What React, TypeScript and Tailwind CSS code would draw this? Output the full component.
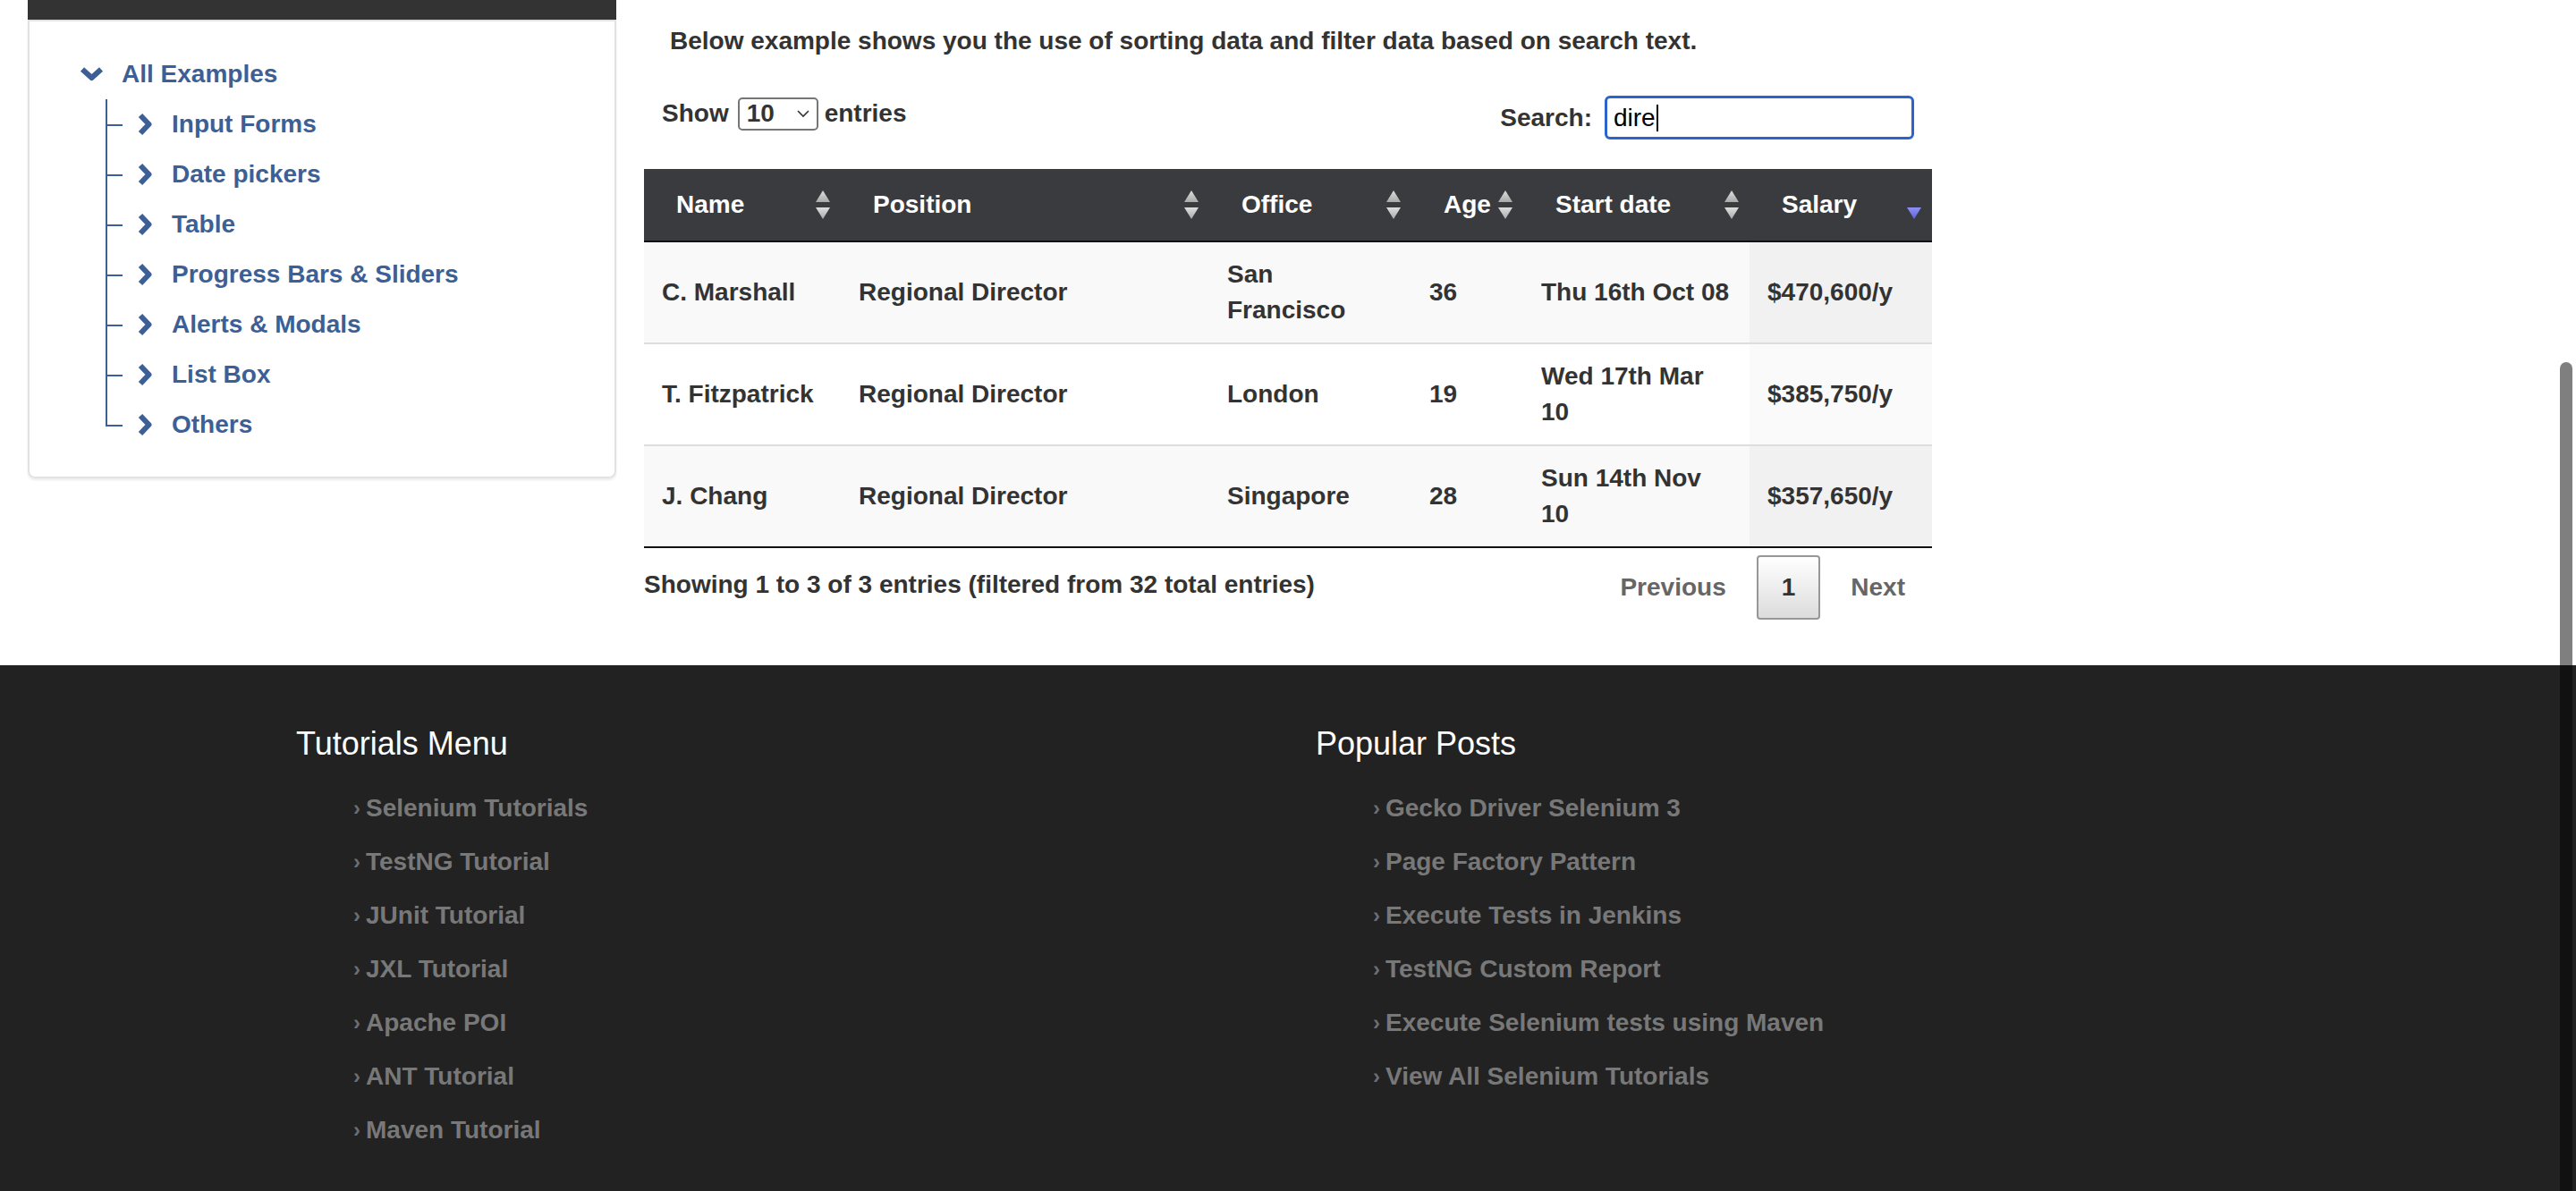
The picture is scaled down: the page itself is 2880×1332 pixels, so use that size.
const rows = [
  { name: "C. Marshall", position: "Regional Director", office: "San Francisco", age: "36", start: "Thu 16th Oct 08", salary: "$470,600/y" },
  { name: "T. Fitzpatrick", position: "Regional Director", office: "London", age: "19", start: "Wed 17th Mar 10", salary: "$385,750/y" },
  { name: "J. Chang", position: "Regional Director", office: "Singapore", age: "28", start: "Sun 14th Nov 10", salary: "$357,650/y" },
]

const examples = ["Input Forms", "Date pickers", "Table", "Progress Bars & Sliders", "Alerts & Modals", "List Box", "Others"]

const tutorials = ["Selenium Tutorials", "TestNG Tutorial", "JUnit Tutorial", "JXL Tutorial", "Apache POI", "ANT Tutorial", "Maven Tutorial"]

const posts = [
  "Gecko Driver Selenium 3",
  "Page Factory Pattern",
  "Execute Tests in Jenkins",
  "TestNG Custom Report",
  "Execute Selenium tests using Maven",
  "View All Selenium Tutorials",
]

// thick glyphicon-like chevrons
function ChevronRight() {
  return (
    <svg width="18" height="26" viewBox="0 0 18 26" className="shrink-0">
      <polyline points="4,3 13.5,13 4,23" fill="none" stroke="#3c6095" strokeWidth="6" strokeLinejoin="round" />
    </svg>
  )
}

function ChevronDown() {
  return (
    <svg width="27" height="18" viewBox="0 0 27 18" className="shrink-0">
      <polyline points="3,3.5 13.5,13 24,3.5" fill="none" stroke="#3c6095" strokeWidth="6" strokeLinejoin="round" />
    </svg>
  )
}

// DataTables style sort arrows
function SortIcon({ desc }: { desc?: boolean }) {
  return (
    <svg width="16" height="34" viewBox="0 0 16 34" className="shrink-0">
      <defs>
        <linearGradient id="sortGrey" x1="0" y1="0" x2="0" y2="1">
          <stop offset="0" stopColor="#dedede" />
          <stop offset="1" stopColor="#a9a9a9" />
        </linearGradient>
        <linearGradient id="sortBlue" x1="0" y1="0" x2="0" y2="1">
          <stop offset="0" stopColor="#8e91f2" />
          <stop offset="1" stopColor="#5d62d8" />
        </linearGradient>
      </defs>
      {!desc && <polygon points="8,1 16,14 0,14" fill="url(#sortGrey)" />}
      <polygon points="0,20 16,20 8,33" fill={desc ? "url(#sortBlue)" : "url(#sortGrey)"} />
    </svg>
  )
}

function HeadCell({ label, desc }: { label: string; desc?: boolean }) {
  return (
    <th className="bg-[#3a3b3e] py-[20px] pl-[36px] pr-[12px] text-left font-bold leading-[40px] text-white border-b-2 border-[#111]">
      <div className="flex items-center justify-between">
        <span>{label}</span>
        <SortIcon desc={desc} />
      </div>
    </th>
  )
}

function FooterList({ title, items }: { title: string; items: string[] }) {
  return (
    <div className="w-[1140px]">
      <h3 className="text-[36px] font-normal leading-[40px] text-white">{title}</h3>
      <ul className="mt-[22px] pl-[64px]">
        {items.map((item) => (
          <li key={item} className="flex h-[60px] items-center text-[28px] font-bold text-[#787878]">
            <span className="mr-[6px] text-[24px] text-[#6e6e6e]">›</span>
            {item}
          </li>
        ))}
      </ul>
    </div>
  )
}

export default function App() {
  return (
    <div className="relative flex h-[1332px] w-full flex-col overflow-hidden bg-white font-['Liberation_Sans',Arial,sans-serif] text-[28px] text-[#333]">
      <div className="flex items-start">
        {/* Sidebar */}
        <div className="ml-[31px] w-[658px]">
          <div className="h-[22px] bg-[#333]" />
          <div className="rounded-b-[8px] border-x-2 border-b-2 border-t-2 border-[#e2e2e2] pt-[31px] pb-[30px] shadow-[0_2px_3px_rgba(0,0,0,0.08)]">
            <div className="flex h-[56px] items-center pl-[56px] font-bold text-[#3c6095]">
              <ChevronDown />
              <span className="ml-[20px]">All Examples</span>
            </div>
            <ul className="ml-[85px]">
              {examples.map((item, i) => (
                <li key={item} className="relative flex h-[56px] items-center pl-[35px] font-bold text-[#3c6095]">
                  <span
                    className={`absolute left-0 top-0 w-[2px] bg-[#3c6095] ${i === examples.length - 1 ? "h-1/2" : "h-full"}`}
                  />
                  <span className="absolute left-0 top-1/2 h-[2px] w-[19px] bg-[#3c6095]" />
                  <ChevronRight />
                  <span className="ml-[21px]">{item}</span>
                </li>
              ))}
            </ul>
          </div>
        </div>

        {/* Main */}
        <div className="ml-[31px] w-[1440px] pt-[26px] pb-[51px] font-bold">
          <p className="pl-[29px] leading-[40px]">
            Below example shows you the use of sorting data and filter data based on search text.
          </p>

          <div className="mt-[41px] flex items-start justify-between">
            <div className="flex h-[40px] items-center pl-[20px]">
              <span>Show</span>
              <div className="ml-[10px] flex h-[37px] w-[90px] items-center justify-between rounded-[5px] border-2 border-[#767676] pl-[8px] pr-[8px]">
                <span>10</span>
                <svg width="14" height="9" viewBox="0 0 14 9">
                  <polyline points="1,1 7,7 13,1" fill="none" stroke="#333" strokeWidth="1.6" />
                </svg>
              </div>
              <span className="ml-[7px]">entries</span>
            </div>
            <div className="flex h-[49px] items-center pr-[20px]">
              <span>Search:</span>
              <div className="ml-[14px] flex h-[49px] w-[346px] items-center rounded-[6px] border-[3px] border-[#2c64c9] pl-[7px] font-normal text-black">
                <span>dire</span>
                <span className="ml-[1px] h-[30px] w-[2px] bg-black" />
              </div>
            </div>
          </div>

          <table className="mt-[33px] w-[1440px] table-fixed border-collapse">
            <colgroup>
              <col className="w-[220px]" />
              <col className="w-[412px]" />
              <col className="w-[226px]" />
              <col className="w-[125px]" />
              <col className="w-[253px]" />
              <col className="w-[204px]" />
            </colgroup>
            <thead>
              <tr>
                <HeadCell label="Name" />
                <HeadCell label="Position" />
                <HeadCell label="Office" />
                <HeadCell label="Age" />
                <HeadCell label="Start date" />
                <HeadCell label="Salary" desc />
              </tr>
            </thead>
            <tbody>
              {rows.map((r, i) => {
                const odd = i % 2 === 0
                const cell = `px-[20px] py-[16px] align-middle leading-[40px] ${odd ? "bg-[#f9f9f9]" : "bg-white"}`
                return (
                  <tr
                    key={r.name}
                    className={i === rows.length - 1 ? "border-b-2 border-[#111]" : "border-b-2 border-[#ddd]"}
                  >
                    <td className={cell}>{r.name}</td>
                    <td className={cell}>{r.position}</td>
                    <td className={cell}>{r.office}</td>
                    <td className={cell}>{r.age}</td>
                    <td className={cell}>{r.start}</td>
                    <td className={`px-[20px] py-[16px] align-middle leading-[40px] ${odd ? "bg-[#f1f1f1]" : "bg-[#fafafa]"}`}>
                      {r.salary}
                    </td>
                  </tr>
                )
              })}
            </tbody>
          </table>

          <div className="flex items-start justify-between">
            <div className="pt-[21px] leading-[40px]">Showing 1 to 3 of 3 entries (filtered from 32 total entries)</div>
            <div className="flex items-center pt-[8px]">
              <span className="border-2 border-transparent px-[28px] py-[14px] leading-[40px] text-[#666]">Previous</span>
              <span className="ml-[4px] rounded-[4px] border-2 border-[#979797] bg-gradient-to-b from-white to-[#dcdcdc] px-[26px] py-[14px] leading-[40px] text-[#333]">
                1
              </span>
              <span className="ml-[4px] border-2 border-transparent px-[28px] py-[14px] leading-[40px] text-[#666]">Next</span>
            </div>
          </div>
        </div>
      </div>

      {/* Footer */}
      <footer className="flex flex-1 bg-[#222] pl-[331px] pt-[68px]">
        <FooterList title="Tutorials Menu" items={tutorials} />
        <FooterList title="Popular Posts" items={posts} />
      </footer>

      {/* overlay scrollbar thumb */}
      <div className="absolute right-[4px] top-[405px] h-[1000px] w-[14px] rounded-full bg-black/50" />
    </div>
  )
}
